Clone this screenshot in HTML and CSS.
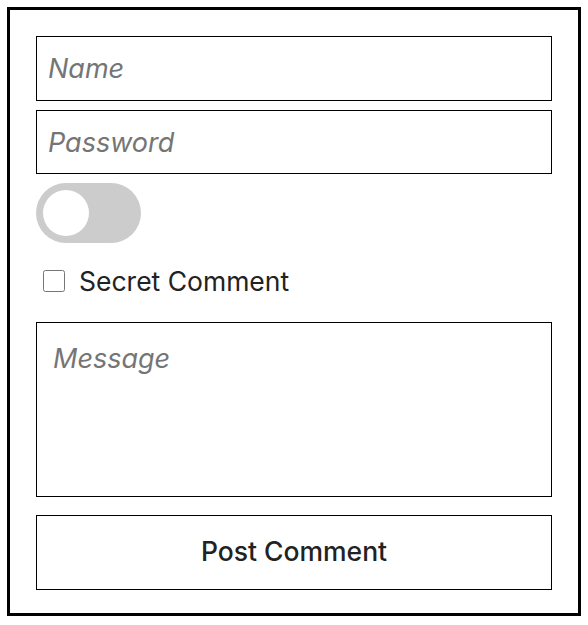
FILE: index.html
```html
<!DOCTYPE html>
<html lang="en">
  <head>
    <title>Comment Form</title>
    <link rel="stylesheet" href="styles.css">
  </head>
  <body>
    <main class="card">
      <form class="comment-form">
        <input class="field field-name" type="text" name="name" placeholder="Name">
        <input class="field field-password" type="password" name="password" placeholder="Password">
        <!-- toggle switch -->
        <label class="switch">
          <input type="checkbox" name="toggle">
          <span class="slider"></span>
        </label>
        <label class="check-row">
          <input class="check" type="checkbox" name="secret">
          <span>Secret Comment</span>
        </label>
        <textarea class="field message" name="message" placeholder="Message"></textarea>
        <button class="post-button" type="submit">Post Comment</button>
      </form>
    </main>
  </body>
</html>
```

FILE: styles.css
```css
body {
  margin: 7px;
  background-color: #ffffff;
  font-family: Inter, "Noto Sans", sans-serif;
}

.card {
  width: 516px;
  padding: 26px 26px 23px 26px;
  border: 3px solid #000;
  background-color: #fff;
  box-shadow: 4px 4px 8px rgba(0, 0, 0, 0.1);
}

.comment-form {
  display: flex;
  flex-direction: column;
}

.field {
  box-sizing: border-box;
  width: 100%;
  border: 1px solid #000;
  border-radius: 0;
  padding: 0 11px;
  font-family: Inter, "Noto Sans", sans-serif;
  font-size: 27px;
  color: #222;
  outline: none;
}

.field::placeholder {
  color: #757575;
  font-style: italic;
}

.field-name {
  height: 65px;
  margin-bottom: 9px;
}

.field-password {
  height: 64px;
  margin-bottom: 9px;
}

.switch {
  position: relative;
  display: block;
  width: 105px;
  height: 60px;
}

.switch input {
  opacity: 0;
  width: 0;
  height: 0;
  margin: 0;
}

.slider {
  position: absolute;
  top: 0;
  left: 0;
  right: 0;
  bottom: 0;
  background-color: #ccc;
  border-radius: 30px;
}

.slider::before {
  content: "";
  position: absolute;
  left: 7px;
  top: 7px;
  width: 46px;
  height: 46px;
  border-radius: 50%;
  background-color: #fff;
}

.check-row {
  display: flex;
  align-items: center;
  height: 40px;
  margin: 18px 0 21px 0;
  font-size: 26.5px;
  color: #222;
}

.check {
  width: 22px;
  height: 22px;
  margin: 0 14px 0 7px;
}

.message {
  height: 175px;
  padding: 19px 16px 16px 16px;
  resize: none;
  margin-bottom: 18px;
}

.post-button {
  height: 75px;
  padding: 0 0 3px 0;
  border: 1px solid #000;
  background-color: #fff;
  font-family: Inter, "Noto Sans", sans-serif;
  font-size: 26.5px;
  font-weight: 500;
  color: #222;
  cursor: pointer;
}
```
